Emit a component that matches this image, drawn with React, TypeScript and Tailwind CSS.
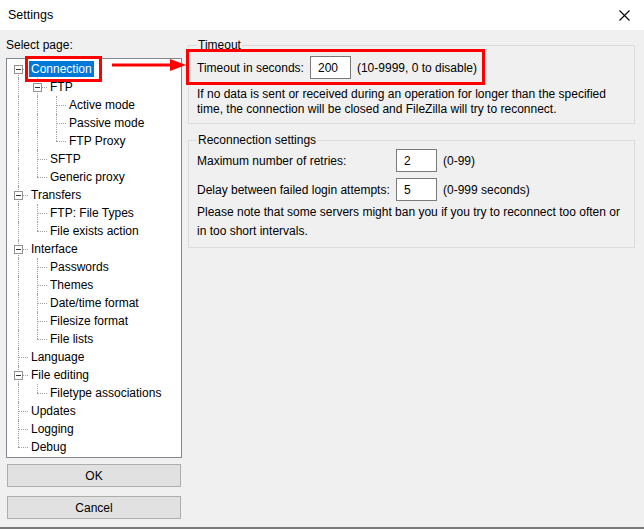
import React from "react";

type Node = { label: string; children?: Node[] };
const tree: Node[] = [
  { label: "Connection", children: [
    { label: "FTP", children: [{ label: "Active mode" }, { label: "Passive mode" }, { label: "FTP Proxy" }] },
    { label: "SFTP" }, { label: "Generic proxy" } ] },
  { label: "Transfers", children: [{ label: "FTP: File Types" }, { label: "File exists action" }] },
  { label: "Interface", children: [{ label: "Passwords" }, { label: "Themes" }, { label: "Date/time format" }, { label: "Filesize format" }, { label: "File lists" }] },
  { label: "Language" },
  { label: "File editing", children: [{ label: "Filetype associations" }] },
  { label: "Updates" }, { label: "Logging" }, { label: "Debug" },
];

type Row = { label: string; cont: boolean[]; last: boolean; first: boolean; kids: boolean };
const rows: Row[] = [];
function walk(nodes: Node[], cont: boolean[], root: boolean) {
  nodes.forEach((n, i) => {
    rows.push({ label: n.label, cont, last: i === nodes.length - 1, first: root && i === 0, kids: !!n.children });
    if (n.children) walk(n.children, [...cont, i !== nodes.length - 1], false);
  });
}
walk(tree, [], true);

const dot = "border-dotted border-[#a0a0a0]";

function TreeRow({ r }: { r: Row }) {
  const sel = r.label === "Connection";
  return (
    <div className="flex h-[18px] items-center">
      {r.cont.map((c, i) => (
        <div key={i} className="relative h-full w-[19px] shrink-0">
          {c && <div className={`absolute left-[9px] top-0 h-full border-l ${dot}`} />}
        </div>
      ))}
      <div className="relative h-full w-[19px] shrink-0">
        {r.first ? (
          <div className={`absolute left-[9px] top-[9px] bottom-0 border-l ${dot}`} />
        ) : (
          <div className={`absolute left-[9px] top-0 border-l ${dot} ${r.last ? "h-[9px]" : "bottom-0"}`} />
        )}
        <div className={`absolute left-[9px] top-[9px] w-[10px] border-t ${dot}`} />
        {r.kids && (
          <div className="absolute left-[5px] top-[5px] flex h-[9px] w-[9px] items-center justify-center border border-[#919191] bg-white">
            <div className="h-px w-[5px] bg-[#333]" />
          </div>
        )}
      </div>
      <span className={`ml-[1px] px-[2px] leading-[16px] ${sel ? "bg-[#0078d7] text-white" : ""}`}>{r.label}</span>
    </div>
  );
}

function Input({ v }: { v: string }) {
  return <div className="flex h-[23px] w-[41px] items-center border border-[#7a7a7a] bg-white px-[7px]">{v}</div>;
}

export default function App() {
  return (
    <div className="relative h-[529px] w-[644px] overflow-hidden bg-[#f0f0f0] text-[12px] text-black" style={{ fontFamily: '"Liberation Sans", Arial, sans-serif' }}>
      <div className="flex h-[30px] items-center justify-between bg-white pl-[8px] pr-[14px]">
        <span className="text-[12.5px]">Settings</span>
        <svg width="11" height="11" viewBox="0 0 11 11"><path d="M0.5 0.5 L10.5 10.5 M10.5 0.5 L0.5 10.5" stroke="#000" strokeWidth="1.1" /></svg>
      </div>
      <div className="flex gap-[6px] pl-[6px] pt-[8px]">
        <div className="flex w-[176px] flex-col">
          <div className="mb-[6px] leading-[14px]">Select page:</div>
          <div className="h-[400px] border border-[#828790] bg-white pl-[2px] pt-[1px]">
            {rows.map((r, i) => <TreeRow key={i} r={r} />)}
          </div>
          <button className="mx-[1px] mt-[6px] h-[23px] border border-[#adadad] bg-[#e1e1e1]">OK</button>
          <button className="mx-[1px] mt-[9px] h-[23px] border border-[#adadad] bg-[#e1e1e1]">Cancel</button>
        </div>
        <div className="flex w-[447px] flex-col gap-[9px]">
          <fieldset className="border border-[#dcdcdc] px-[8px] pb-[6px]">
            <legend className="px-[1px] text-[12px] leading-[14px]">Timeout</legend>
            <div className="mt-[4px] flex items-center gap-[6px]">
              <span>Timeout in seconds:</span><Input v="200" /><span>(10-9999, 0 to disable)</span>
            </div>
            <div className="mt-[8px] leading-[15px]">If no data is sent or received during an operation for longer than the specified time, the connection will be closed and FileZilla will try to reconnect.</div>
          </fieldset>
          <fieldset className="border border-[#dcdcdc] px-[8px] pb-[6px]">
            <legend className="px-[1px] leading-[14px]">Reconnection settings</legend>
            <div className="mt-[2px] flex items-center">
              <span className="w-[199px]">Maximum number of retries:</span><Input v="2" /><span className="ml-[6px]">(0-99)</span>
            </div>
            <div className="mt-[6px] flex items-center">
              <span className="w-[199px]">Delay between failed login attempts:</span><Input v="5" /><span className="ml-[6px]">(0-999 seconds)</span>
            </div>
            <div className="mt-[2px] leading-[19px]">Please note that some servers might ban you if you try to reconnect too often or in too short intervals.</div>
          </fieldset>
        </div>
      </div>
      <div className="absolute bottom-0 left-0 right-0 h-[2px] bg-[#7a7a7a]" />
      <div className="absolute left-[25px] top-[56px] h-[26px] w-[77px] border-[3px] border-[#ff0000]" />
      <div className="absolute left-[186px] top-[49px] h-[36px] w-[299px] border-[3px] border-[#ff0000]" />
      <svg className="absolute left-[112px] top-[59px]" width="74" height="12">
        <line x1="0" y1="6" x2="62" y2="6" stroke="#ff0000" strokeWidth="3" />
        <polygon points="58,0 74,6 58,12" fill="#ff0000" />
      </svg>
    </div>
  );
}
